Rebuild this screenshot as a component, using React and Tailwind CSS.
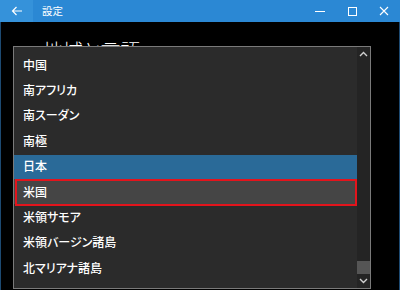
const ITEMS = ['中国', '南アフリカ', '南スーダン', '南極', '日本', '米国', '米領サモア', '米領バージン諸島', '北マリアナ諸島']

function Chevron({ down }) {
  return (
    <svg width="9" height="6" viewBox="0 0 9 6" className="block">
      <polyline
        points={down ? '1,1 4.5,4.5 8,1' : '1,5 4.5,1.5 8,5'}
        fill="none"
        stroke="#d0d0d0"
        strokeWidth="1.4"
      />
    </svg>
  )
}

function TitleBar() {
  return (
    <div className="h-[22px] flex items-stretch bg-[#2b88d4] text-white shrink-0">
      <div className="w-[33px] flex items-center justify-center bg-[#3592da]">
        <svg width="12" height="10" viewBox="0 0 12 10">
          <path d="M11 5H1.5M5.5 1L1.5 5l4 4" fill="none" stroke="#fff" strokeWidth="1.2" />
        </svg>
      </div>
      <div className="flex-1 flex items-center pl-[9px] text-[10.5px] font-['Noto_Sans_CJK_JP',sans-serif]">設定</div>
      <div className="w-[32px] flex items-center justify-center">
        <div className="w-[10px] h-px bg-white" />
      </div>
      <div className="w-[32px] flex items-center justify-center">
        <div className="w-[9px] h-[9px] border border-white" />
      </div>
      <div className="w-[32px] flex items-center justify-center">
        <svg width="10" height="10" viewBox="0 0 10 10">
          <path d="M1 1l8 8M9 1l-8 8" stroke="#fff" strokeWidth="1.1" />
        </svg>
      </div>
    </div>
  )
}

function Row({ label }) {
  const selected = label === '日本'
  const marked = label === '米国'
  return (
    <div
      className={`relative h-[25.4px] flex items-center pl-[9px] ${selected ? 'bg-[#2a6a98]' : marked ? 'bg-[#454545]' : ''}`}
    >
      {selected && <div className="absolute inset-x-0 top-0 h-[1px] bg-[#2b2b2b]" />}
      <span className="relative">{label}</span>
      {marked && <div className="absolute left-[1px] right-0 top-0 -bottom-[2px] border-2 border-[#e3141c]" />}
    </div>
  )
}

export default function App() {
  return (
    <div className="relative w-[400px] h-[290px] bg-black overflow-hidden flex flex-col font-['Noto_Sans_CJK_JP','Noto_Sans',sans-serif]">
      <TitleBar />
      <div className="flex-1 border-x border-[#1d4a72] pl-[42px] pt-[17px]">
        <div className="text-white text-[20px] font-light leading-[24px] [font-feature-settings:'palt']">地域と言語</div>
      </div>

      <div className="absolute left-[13px] top-[46px] w-[358px] h-[243px] border border-[#7a7a7a] bg-[#2b2b2b] flex">
        <div className="flex-1 pt-[5px] text-white text-[12px] font-medium [font-feature-settings:'palt']">
          {ITEMS.map((it) => (
            <Row key={it} label={it} />
          ))}
        </div>
        <div className="w-[13px] bg-[#242424] flex flex-col items-center">
          <div className="h-[14px] flex items-center justify-center">
            <Chevron />
          </div>
          <div className="flex-1" />
          <div className="w-full h-[13px] bg-[#555555]" />
          <div className="h-[14px] flex items-center justify-center">
            <Chevron down />
          </div>
        </div>
      </div>
    </div>
  )
}
